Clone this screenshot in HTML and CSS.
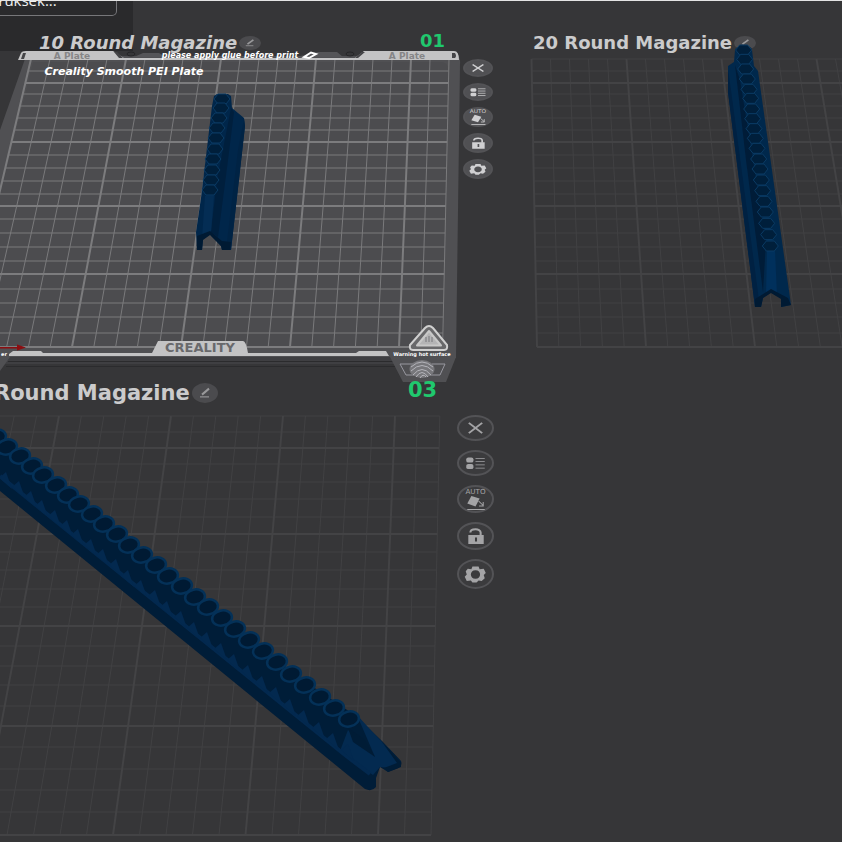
FILE: index.html
```
<!DOCTYPE html>
<html lang="en">
<head>
<meta charset="utf-8">
<meta name="viewport" content="width=device-width, initial-scale=1">
<title>Build plates</title>
<link rel="stylesheet" href="styles.css">
</head>
<body>
<svg class="symbols" aria-hidden="true">
  <symbol id="i-close" viewBox="0 0 36 28" preserveAspectRatio="none"><path class="s" d="M11.500 8.500 24.500 19.500M24.500 8.500 11.500 19.500"/></symbol>
  <symbol id="i-list" viewBox="0 0 36 28" preserveAspectRatio="none"><rect class="f" x="9" y="8" width="7" height="5.500" rx="2"/><rect class="f" x="9" y="15" width="7" height="5.500" rx="2"/><path class="t" d="M18 9h9M18 12.500h9M18 16h9M18 19.500h9"/></symbol>
  <symbol id="i-auto" viewBox="0 0 36 28" preserveAspectRatio="none"><path class="f" d="M14 11 22 13.500 18 21.500 10 18.500z"/><path class="t" d="M21 16l4.500 4.500M25.500 17v4h-4M10 24.500h17"/><text x="18" y="9" class="auto">AUTO</text></symbol>
  <symbol id="i-lock" viewBox="0 0 36 28" preserveAspectRatio="none"><path class="f" fill-rule="evenodd" d="M11 13h15v9H11zM17.500 15.500v4h2v-4z"/><path class="s" d="M13 10.500c0-4 10-4.500 10 0v3"/></symbol>
  <symbol id="i-gear" viewBox="0 0 36 28" preserveAspectRatio="none"><path class="f" fill-rule="evenodd" d="M15 7h6l1 2.500 4-.5 2 4-2 2 1 3-3 2.500-3-.5-2 2h-4l-1.500-2-4 .5-2-4 2-2-1-3 2-2.500 3.500.500zM18 10.500c-6 0-6 8 0 8s6-8 0-8z"/></symbol>
  <symbol id="i-pen" viewBox="0 0 26 18" preserveAspectRatio="none"><path class="s" d="M17 5 10 10.500"/><path class="t" d="M8 12.500h9"/></symbol>
</svg>

<main class="canvas">
  <svg class="layer" width="842" height="842" aria-hidden="true">
    <g class="grid dim" id="grid2"></g>
    <g class="grid dim" id="grid3"></g>
    <path class="side" d="M26 56H455Q461 56 460 64L456 358H-80Z"/>
    <path class="bed" d="M33 62H441Q448 62 448 69L443 348H-38Z"/>
    <g class="grid lit" id="grid1"></g>
    <path class="base" d="M-10 357H400V364H-10Z"/>
    <path class="edge" d="M8 361.500H396M6 366.500H398"/>
    <path class="side" d="M0 357H10L0 371ZM390 357H456L446 382H403Z"/>
    <path class="trim" d="M24 58H457V60H22Z"/>
    <path class="clip" d="M134 57 143 53H159L166 57ZM296 57 318 52H337L343 57Z"/>
    <path class="trim" d="M18 60 21 53Q22 51 26 51H113L127 60ZM352 60 364 51H454Q459 51 459 60Z"/>
    <path class="mark" d="M21 59 23 53H26L24 59ZM114 52H117L123 58H119ZM365 52H362L355 58H358ZM452 53H455Q457 56 455 58H452Z"/>
    <ellipse class="ring" cx="131" cy="54" rx="4" ry="2"/><ellipse class="ring" cx="350" cy="54" rx="4" ry="2"/>
    <path class="pen" d="M304 57 311 52.500 316 54 309 58Z"/>
    <path class="trim" d="M9 354 13 351H41L43 353H152L158 341H243Q246 341 248 353H356L359 351H386L389 356H9Z"/>
    <text class="print wide" x="72" y="59">A Plate</text>
    <text class="print wide" x="407" y="59">A Plate</text>
    <text class="print note" x="230" y="58">please apply glue before print</text>
    <text class="print name" x="124" y="75">Creality Smooth PEI Plate</text>
    <text class="print brand" x="200" y="352">CREALITY</text>
    <text class="print tiny" x="422" y="356">Warning hot surface</text>
    <text class="print tiny" x="4" y="356">er</text>
    <path class="warn" d="M425 328Q429 324 433 328L447 345Q448 350 444 350H413Q409 350 410 345Z"/>
    <path class="warnin" d="M429 331 441 345.500H417Z"/>
    <path class="heat" d="M426 337v5M429 336v6M432 337v5"/>
    <path class="wing" d="M400 364H413L416 375H406ZM445 364H432L429 375H440Z"/>
    <ellipse cx="422" cy="369" rx="12.500" ry="9" fill="#77777b"/>
    <path class="finger" d="M411 367q11-10 22 0M411 371q11-11 22 0M413 375q9-11 18 0M416 377q6-9 12 0M420 378q3-5 6-1"/>
    <path d="M0 347H17V344.500L26 347.500 17 350.500V348.500H0Z" fill="#8b0d10"/>
  </svg>

  <aside class="panel"><button class="choice" type="button">Yüksek...</button></aside>

  <section class="head one"><h2>10 Round Magazine</h2><button class="edit" type="button" aria-label="Rename plate"><svg><use href="#i-pen"/></svg></button></section>
  <section class="head two"><h2>20 Round Magazine</h2><button class="edit" type="button" aria-label="Rename plate"><svg><use href="#i-pen"/></svg></button></section>
  <section class="head three"><h2>Round Magazine</h2><button class="edit" type="button" aria-label="Rename plate"><svg><use href="#i-pen"/></svg></button></section>
  <strong class="num n1">01</strong>
  <strong class="num n3">03</strong>

  <nav class="tools near" aria-label="Plate 01 tools">
    <button type="button" aria-label="Delete"><svg><use href="#i-close"/></svg></button>
    <button type="button" aria-label="Objects"><svg><use href="#i-list"/></svg></button>
    <button type="button" aria-label="Auto orient"><svg><use href="#i-auto"/></svg></button>
    <button type="button" aria-label="Lock"><svg><use href="#i-lock"/></svg></button>
    <button type="button" aria-label="Settings"><svg><use href="#i-gear"/></svg></button>
  </nav>
  <nav class="tools far" aria-label="Plate 03 tools">
    <button type="button" aria-label="Delete"><svg><use href="#i-close"/></svg></button>
    <button type="button" aria-label="Objects"><svg><use href="#i-list"/></svg></button>
    <button type="button" aria-label="Auto orient"><svg><use href="#i-auto"/></svg></button>
    <button type="button" aria-label="Lock"><svg><use href="#i-lock"/></svg></button>
    <button type="button" aria-label="Settings"><svg><use href="#i-gear"/></svg></button>
  </nav>

  <svg class="layer" width="842" height="842" aria-hidden="true">
    <path fill="#00264a" d="M214 96 217 94H228L231 96 232 108 244 118 245 126 231 250H222L221 246 210 234 203 239 202 250H197L196 232 201 198 212 106Z"/>
    <path fill="#001f3d" d="M231 108 234 112 228 160 218 237 211 232 217 180Z"/>
    <path fill="#002344" d="M244 119 245 126 231 250H226L238 150Z"/>
    <path fill="#042d54" d="M205 196H214L211 232 202 238Z"/>
    <path fill="#001a33" d="M197 236 210 231 222 241 231 242 230 250H222L221 246 210 235 203 240 202 250H197Z"/>
    <g id="cells1"></g>

    <path fill="#00284c" d="M735 50Q736 46 744 46T752 50L754 66 758 71 791 305 781 307V298L771 292 763 298 761 307H755L728 92V66L734 62Z"/>
    <path fill="#001c38" d="M735 65 740 80 766 240 763 292 746 160Z"/>
    <path fill="#002142" d="M728 70 731 90 759 300 755 307 728 92Z"/>
    <path fill="#00305c" d="M767 250H775L777 296 771 291 766 296Z"/>
    <path fill="#001a33" d="M755 299 771 289 788 298 791 305 781 307V299L771 293 763 298 761 307H755Z"/>
    <g id="cells2"></g>

    <path fill="#001d38" d="M0 436 100 516 220 614 300 678 356 716 364 724 382 741 401 761Q403 767 396 769L388 772 380 767 376 778 376 787Q372 792 365 789L0 491Z"/>
    <path fill="#032a50" d="M357 715 368 727 401 762 390 768 380 767 373 775 340 751 348 730 375 757Z"/>
    <path fill="#001c36" d="M348 728 364 739 375 757 353 742ZM382 742 401 762V767L388 772 384 768 397 763Z"/>
    <path fill="none" stroke="#03294f" stroke-width="4" d="M0 476 345 755 370 774"/>
    <g id="teeth"></g>
    <g id="cells3"></g>
  </svg>
</main>
<script src="scene.js"></script>
</body>
</html>
```
FILE: styles.css
```
* { box-sizing: border-box; }
body {
  margin: 0;
  background: #363638;
  font-family: "DejaVu Sans", Verdana, sans-serif;
}
.symbols { position: absolute; width: 0; height: 0; }
.canvas {
  position: relative;
  min-height: 100vh;
  overflow: hidden;
  border-top: 1px solid #e4e4e4;
}
.layer { position: absolute; top: -1px; left: 0; pointer-events: none; }
button { padding: 0; border: 0; background: none; color: inherit; font: inherit; }

.panel {
  position: absolute;
  top: 0;
  left: 0;
  width: 133px;
  height: 50px;
  overflow: hidden;
  background: #2a2a2c;
}
.choice {
  display: block;
  width: 117px;
  height: 32px;
  margin-top: -17px;
  border: 1px solid #77777a;
  border-left: 0;
  border-radius: 0 5px 5px 0;
  color: #f0f0f0;
  font: 15px "Open Sans", sans-serif;
  text-align: left;
  text-indent: -4px;
}

.grid path { fill: none; }
.dim .thin { stroke: #414143; }
.dim .bold { stroke: #434345; stroke-width: 2; }
.lit .thin { stroke: #7a7a7c; }
.lit .bold { stroke: #7c7c7e; stroke-width: 2; }
.side { fill: #505053; }
.bed { fill: #4c4c4f; }
.base { fill: #3f3f42; }
.edge { fill: none; stroke: #2b2b2d; }
.trim { fill: #c3c3c4; }
.clip { fill: #555558; }
.mark { fill: #444447; }
.ring { fill: none; stroke: #252527; }
.pen { fill: none; stroke: #fff; stroke-width: 2; }
.warn { fill: #69696b; stroke: #d0d0d0; stroke-width: 2; }
.warnin { fill: #b4b4b5; stroke: #c8c8c8; stroke-width: 2; stroke-linejoin: round; }
.heat { stroke: #77777a; }
.wing { fill: none; stroke: #9898a0; }
.finger { fill: none; stroke: #b4b4ba; }

.print { font-weight: bold; text-anchor: middle; fill: #fff; }
.wide { font-size: 9px; fill: #858587; }
.note { font-size: 8px; font-style: italic; }
.name { font-size: 11px; font-style: italic; }
.brand { font-size: 13px; fill: #69696c; }
.tiny { font-size: 5px; }

.head { position: absolute; display: flex; align-items: center; color: #cbcbcc; }
.head h2 { margin: 0; font-size: 18px; line-height: 20px; white-space: nowrap; }
.edit { width: 22px; height: 14px; border-radius: 50%; background: #4b4b4e; color: #99999b; }
.one { top: 32px; left: 39px; gap: 2px; font-style: italic; }
.two { top: 32px; left: 533px; gap: 2px; }
.three { top: 380px; left: -6px; gap: 2px; }
.three h2 { font-size: 21px; line-height: 24px; }
.three .edit { width: 26px; height: 20px; }
.edit svg, .tools svg { display: block; width: 100%; height: 100%; }

.num { position: absolute; color: #20c86e; }
.n1 { top: 30px; left: 420px; font-size: 18px; line-height: 20px; }
.n3 { top: 376px; left: 408px; font-size: 21px; line-height: 26px; }

.tools { position: absolute; display: grid; color: #a4a4a6; }
.tools button { border: 2px solid #535356; border-radius: 50%; background: #3b3b3d; }
.tools svg { margin: -2px; width: calc(100% + 4px); height: calc(100% + 4px); }
.near { top: 58px; left: 463px; grid-template-columns: 30px; grid-template-rows: 18px 18px 20px 20px 20px; gap: 6px; }
.near button { background: #505053; color: #d0d0d2; }
.far { top: 414px; left: 457px; grid-template-columns: 37px; grid-template-rows: 26px 26px 28px 28px 30px; gap: 9px; }
.f { fill: currentColor; }
.s { fill: none; stroke: currentColor; stroke-width: 2; }
.t { fill: none; stroke: currentColor; stroke-width: 1; }
.auto { font-size: 7px; text-anchor: middle; fill: currentColor; }
```
FILE: scene.js
```
const NS = "http://www.w3.org/2000/svg";

function add(id, tag, attrs) {
  const el = document.createElementNS(NS, tag);
  for (const key in attrs) el.setAttribute(key, attrs[key]);
  document.getElementById(id).append(el);
}

// Rows are the y of each horizontal line; every fifth line is a bold one.
function grid(id, rows, topX, topStep, botX, botStep) {
  const top = rows[0], bottom = rows[rows.length - 1];
  let thin = "", bold = "";
  rows.forEach((y, i) => {
    const t = (y - top) / (bottom - top);
    const left = topX + (botX - topX) * t;
    const right = left + 22 * (topStep + (botStep - topStep) * t);
    const line = `M${left} ${y}H${right}`;
    if (i % 5 === 2) bold += line; else thin += line;
  });
  for (let k = 0; k <= 22; k++) {
    const line = `M${topX + topStep * k} ${top}L${botX + botStep * k} ${bottom}`;
    if (k % 5 === 0) bold += line; else thin += line;
  }
  add(id, "path", { class: "thin", d: thin });
  add(id, "path", { class: "bold", d: bold });
}

const back = [59, 71, 83, 94, 106, 118, 130, 142, 155, 168, 181, 194, 206, 219, 233, 247, 261, 274, 289, 303, 317, 333, 347];
const front = [416, 432, 448, 464, 482, 499, 517, 534, 552, 570, 589, 607, 626, 646, 666, 685, 706, 726, 747, 769, 790, 812, 835];
grid("grid1", back, 31, 19, -37, 21.8);
grid("grid2", back, 531.5, 19, 537, 21.8);
grid("grid3", front, -53, 22.4, -152, 26.5);

function hexCells(id, points, rx, ry) {
  points.forEach(([x, y]) => {
    add(id, "path", {
      d: `M${x - rx} ${y}L${x - rx / 2} ${y - ry}H${x + rx / 2}L${x + rx} ${y}L${x + rx / 2} ${y + ry}H${x - rx / 2}Z`,
      fill: "#001f3b", stroke: "#0a3b64", "stroke-linejoin": "round"
    });
  });
}

hexCells("cells1", [[222, 99], [221, 108], [219, 118], [217, 128], [216, 138], [215, 149], [213, 159], [212, 170], [211, 180], [210, 190]], 8, 5);

const xs = [131, 134, 137, 142, 147, 152, 155, 158, 162, 166, 171, 176, 180, 184, 188, 192, 196, 200, 206, 211];
const ys = [60, 88, 117, 147, 178, 205, 237, 266, 296, 325, 355, 387, 417, 450, 482, 514, 546, 580, 614, 648];
hexCells("cells2", xs.map((x, i) => [700 + x / 3, 30 + ys[i] / 3]), 8, 5);

const long = [[-4, 437], [7, 447], [20, 456], [32, 466], [43, 475], [56, 485], [68, 495], [79, 504], [92, 514], [104, 524], [117, 534], [129, 545], [142, 555], [156, 565], [168, 576], [182, 586], [195, 597], [208, 607], [222, 618], [235, 629], [249, 640], [263, 651], [277, 662], [291, 674], [305, 685], [320, 697], [334, 708], [349, 719]];
long.forEach(([x, y]) => {
  add("teeth", "path", { d: `M${x - 8} ${y + 31}L${x - 1} ${y + 25}L${x + 5} ${y + 42}Z`, fill: "#03294f" });
  add("cells3", "ellipse", {
    cx: x, cy: y, rx: 10, ry: 7.5, transform: `rotate(-12 ${x} ${y})`,
    fill: "#001a33", stroke: "#043158", "stroke-width": 2.5
  });
});
```
